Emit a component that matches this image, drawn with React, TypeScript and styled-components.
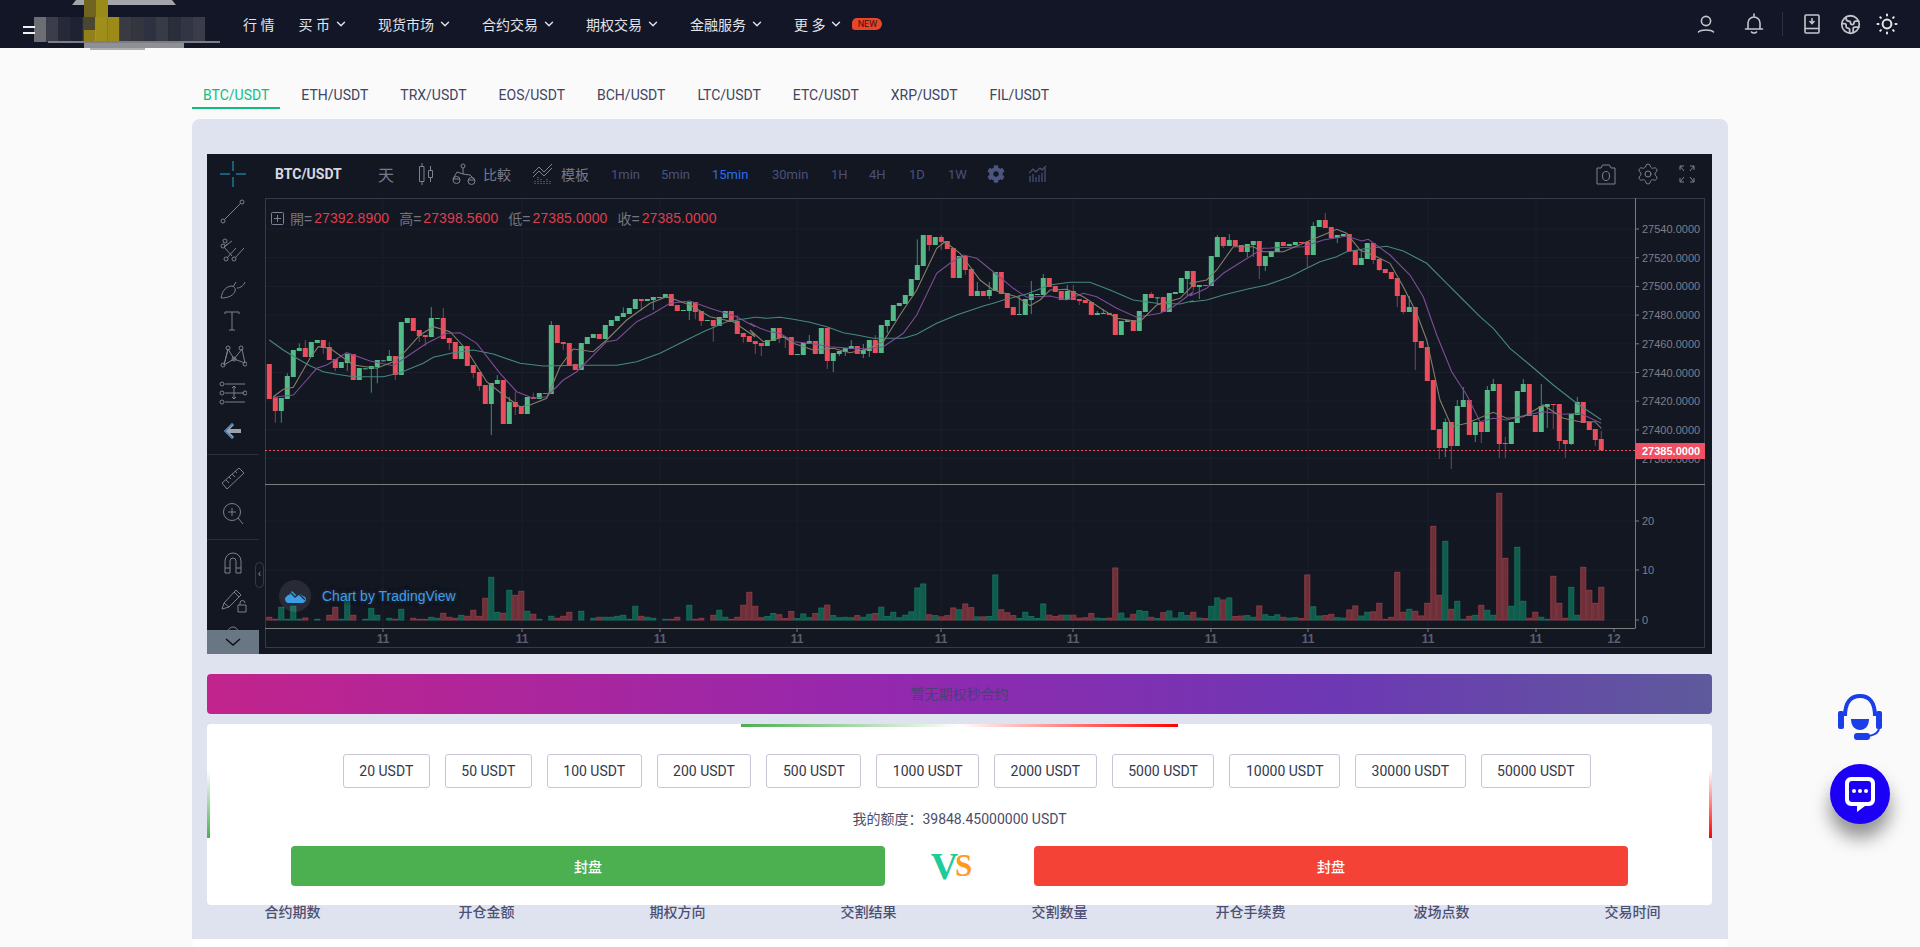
import React from "react";
import styled, { createGlobalStyle } from "styled-components";
import { ChevronDown, Earth, Settings } from "lucide-react";
import { FaCog } from "react-icons/fa";

const CJK = `Roboto, "Noto Sans CJK SC", sans-serif`;

const Global = createGlobalStyle`
  html, body { margin: 0; padding: 0; background: #fafafa; height: 947px; overflow: hidden; }
  body { font-family: ${CJK}; }
  * { box-sizing: border-box; }
`;

/* ---------- chart data, read from the reference (zoomed y, 3x) ---------- */
type Row = [string, number, number, ...number[]];
const rows: Row[] = [
  ["r",492,597],["r",592,633,668],["g",594,633,668],["g",528,597,520],["g",450,531],["g",444,453,430],["r",444,471,420],["g",426,471],["g",420,429],["r",420,444,462],
  ["r",441,480,426],["r",477,504,513],["g",486,504],["g",462,489,513],["r",462,540],["g",504,540],["g",505,508],["g",498,507,578],["g",480,501,550],["g",481,484],
  ["g",468,483,450],["r",468,525,540],["g",366,525],["g",354,369],["r",354,393],["r",390,408,426],["r",405,411,438],["g",354,411,321],["g",354,357],["r",354,417,324],
  ["r",414,429,450],["r",426,477],["g",438,477],["r",438,498],["r",495,519,535],["r",516,558,572],["r",555,612],["g",549,612,705],["g",540,552,525],["r",540,672],
  ["g",606,672,590],["r",606,621,575,645],["r",618,642],["g",591,642],["r",591,597,578],["g",579,597],["r",579,582],["g",375,582,363],["r",375,429],["r",426,432,450],
  ["r",429,495],["r",492,510],["g",429,510],["g",411,432],["g",402,414],["r",402,417],["g",375,417],["g",360,378],["g",348,363],["g",339,351,322],
  ["g",324,342],["g",297,327],["r",297,303,332],["g",297,303],["g",291,300,330],["g",291,294],["g",282,294],["r",282,318],["r",315,333],["g",330,333],
  ["g",306,333,360],["r",306,336,358],["r",333,363,378],["g",360,363],["r",360,378,425],["g",351,378],["g",333,354],["r",333,366],["r",363,402,345],["r",399,411,428],
  ["r",408,426],["r",423,432,462],["r",429,438,468],["g",420,438],["g",384,423],["r",384,414,429],["r",411,414,444],["r",411,465],["g",462,465],["g",429,465],
  ["g",423,432,405],["r",423,462],["g",384,462],["r",384,483,507],["g",459,483,516],["g",453,462,468],["g",444,456,468],["g",438,447,420],["r",438,462],["g",450,462,474,432],
  ["g",420,453,471],["r",420,459,405],["g",375,459],["g",360,378,399],["g",315,363],["g",309,318],["g",285,312],["g",237,288],["g",195,240,118],["g",105,198],
  ["r",105,135,153],["g",111,135],["r",111,126,105,150],["r",123,147],["r",144,234],["g",168,234],["r",168,210,225],["r",207,288],["g",273,288,246],["r",273,288],
  ["g",270,288,246,297],["g",216,273],["r",216,282],["r",279,324],["r",321,345],["g",342,345,285],["g",297,345],["g",282,300,243,342],["g",282,285],["g",234,285,222],
  ["r",234,261],["r",258,276],["r",273,300],["g",273,300,255],["r",273,300,255],["r",297,303,315],["r",300,309],["r",306,345],["g",339,345,333],["g",339,342,327],
  ["r",339,345],["r",342,405],["g",363,405],["g",361,366],["r",360,393],["g",333,393],["g",282,336],["r",282,294,276],["g",292,295,312],["r",291,336],
  ["g",279,336],["g",276,282],["g",234,279],["g",213,237,288],["r",213,261,272],["g",255,261,297],["r",255,258],["g",168,258],["g",111,171,105],["r",111,138,144],
  ["g",120,138,102],["r",120,138],["r",135,156],["g",132,156,171],["g",123,135,171],["r",123,198,237],["g",168,198,213],["g",153,171],["g",126,156],["r",126,138],
  ["g",132,138],["g",126,135],["r",126,129],["r",126,165,201],["g",78,165,66],["g",60,81],["r",60,84,39],["r",81,114],["g",105,114,129],["g",102,108],
  ["r",102,153],["r",150,195],["g",174,195,150],["g",129,177],["r",129,180,192],["r",177,210,213],["r",207,219],["r",216,237],["r",234,288,321],["r",285,336,342],
  ["g",321,336,288],["r",321,426,510],["r",423,444],["r",441,543],["r",540,690],["r",687,744,777],["g",666,744,655,771],["r",666,738,807],["g",618,738,600],["g",600,621,561],
  ["r",600,705],["g",666,705,726],["r",666,696,729],["g",570,696,558],["g",552,573,537],["r",552,732,774],["r",729,732,711,774],["g",666,732],["g",573,669],["g",552,576,537],
  ["r",552,648],["r",645,696],["g",618,696,552],["g",612,621,684],["r",612,615,687],["r",612,723,747],["r",720,732,774],["g",642,732,735],["g",606,645,591],["r",606,669],
  ["r",666,690],["r",687,720,738],["r",717,751,693],
];

const volTop = [412,418,382,418,379,418,414,421,418,421,406,382,418,350,406,421,418,385,406,421,415,418,388,421,415,418,418,412,415,400,412,415,406,409,391,409,355,292,397,400,331,346,334,394,403,418,421,409,415,409,397,421,394,421,415,412,412,412,409,406,418,379,409,412,415,421,418,418,412,421,376,418,415,421,406,391,412,418,412,376,337,379];
const volEnd = [610,658,652,517,637,628,634,648,610,379,586,424,628,604,658,649,646,616,631,646,280,475,619,442,604,655,637,652,658,529,610,655,562,646,502,571,610,562];
const volOver: Record<number, number> = { 121: 45, 141: 52, 173: 45, 108: 32, 109: 36, 158: 22, 159: 20, 160: 22, 165: 14, 116: 16, 129: 16, 114: 12, 180: 10, 181: 14 };

const candles = rows.map((r, i) => {
  const [c, t, b, ...w] = r;
  const body = (b - t) / 3;
  let vol: number;
  if (i < 82) vol = (420 - volTop[i]) / 3;
  else if (i >= 185) vol = (660 - volEnd[i - 185]) / 3;
  else vol = volOver[i] ?? Math.min(18, body * 0.42 + 1);
  return {
    up: c === "g",
    x: 269.3 + 6 * i,
    top: 200 + t / 3,
    bot: 200 + b / 3,
    hi: 200 + Math.min(t, ...w) / 3,
    lo: 200 + Math.max(b, ...w) / 3,
    vol,
  };
});

type Seg = [number, number[]];
const line = (segs: Seg[]) =>
  segs
    .flatMap(([ox, p]) => {
      const out: string[] = [];
      for (let i = 0; i < p.length; i += 2) out.push(`${(ox + p[i] / 3).toFixed(1)},${(200 + p[i + 1] / 3).toFixed(1)}`);
      return out;
    })
    .join(" ");

const teal = line([
  [260, [28,420,70,450,110,475,150,497,190,515,230,523,280,530,330,530,370,530,420,518,490,490,520,472,580,458,640,450,700,462,780,490,850,498,960,496,1070,496,1130,485,1200,460,1260,430,1330,395,1400,365,1485,352]],
  [750, [20,352,50,355,90,352,130,358,180,367,230,380,280,398,320,405,370,415,460,415,500,403,560,370,620,345,700,318,730,310,760,300,830,282,900,255,960,247,1020,247,1080,270,1150,300,1220,310,1290,312,1330,302]],
  [1190, [0,306,50,300,100,285,170,268,230,255,300,230,350,205,390,185,440,170,470,155,520,147,590,139,640,153,710,190,770,250,820,300,870,350,910,385,960,445,1020,495,1090,555,1160,610,1234,659]],
]);
const purple = line([
  [260, [40,592,100,585,140,540,170,505,200,495,260,458,330,483,400,497,440,470,500,430,560,400,600,398,650,430,720,520,770,575,820,595,860,590,910,540,950,515,1040,425,1070,420,1130,365,1180,340,1230,310,1290,303,1350,325,1430,350,1485,380]],
  [750, [0,370,30,385,60,395,90,400,130,425,180,430,240,440,300,445,350,446,400,440,460,400,500,345,560,220,600,190,640,165,680,175,730,215,790,265,830,292,900,288,950,300,1000,280,1040,290,1100,325,1160,352,1230,340,1270,320,1330,275]],
  [1190, [0,288,50,265,100,220,150,188,220,145,340,140,400,120,470,108,515,123,535,118,600,165,660,225,700,290,740,405,785,515,830,585,870,665,910,655,950,660,1010,645,1060,635,1120,643,1170,640,1234,670]],
]);
const tan = line([
  [260, [40,590,70,568,100,562,150,475,175,440,210,445,280,495,350,505,400,485,430,460,480,405,520,380,570,395,620,450,680,545,730,585,780,620,810,615,860,595,900,500,940,447,1000,455,1040,420,1100,360,1170,310,1220,290,1290,315,1350,350,1420,365,1485,410]],
  [750, [0,390,40,425,70,420,100,410,130,430,190,450,250,445,300,458,350,448,400,425,450,345,500,270,560,145,585,125,630,160,690,240,730,270,800,290,840,317,870,300,900,270,950,268,1000,290,1060,330,1100,355,1170,365,1220,315,1290,295,1330,255]],
  [1190, [0,250,50,240,80,210,130,140,190,140,220,155,280,155,340,130,400,105,440,88,470,100,510,150,560,170,600,190,640,260,680,340,710,420,750,600,785,680,830,670,910,637,950,655,1000,650,1060,615,1120,655,1170,665,1215,665,1234,685]],
]);

const priceLabels = [27540,27520,27500,27480,27460,27440,27420,27400,27380];
const priceY = (v: number) => 229 + ((27540 - v) / 20) * 28.7;
const timeTicks = [383,522,660,797,941,1073,1211,1308,1428,1536];

/* ---------- page ---------- */
const Page = styled.div`
  width: 1920px;
  height: 947px;
  overflow: hidden;
  position: relative;
`;
const Header = styled.header`
  height: 48px;
  background: #121626;
  display: flex;
  align-items: center;
  padding-right: 22px;
  color: #e2e4ea;
  font-size: 14px;
`;
const Brand = styled.div`
  width: 243px;
  height: 48px;
  position: relative;
  flex: none;
`;
const LogoMosaic = styled.svg`
  position: absolute;
  left: 0;
  top: 0;
`;
const Nav = styled.nav`
  display: flex;
  align-items: center;
  height: 48px;
`;
const NavItem = styled.div<{ $gap?: number }>`
  display: flex;
  align-items: center;
  gap: 4px;
  margin-right: ${(p) => p.$gap ?? 30}px;
  white-space: pre;
`;
const NewBadge = styled.span`
  width: 30px;
  height: 12px;
  border-radius: 5px 6px 6px 3px;
  background: #e8452a;
  color: #3a1410;
  font-size: 9px;
  line-height: 12px;
  text-align: center;
  margin-left: 5px;
`;
const HeaderRight = styled.div`
  margin-left: auto;
  display: flex;
  align-items: center;
  color: #c4c6cc;
`;
const HeadIcon = styled.div<{ $ml?: number }>`
  width: 22px;
  height: 22px;
  margin-left: ${(p) => p.$ml ?? 0}px;
  display: flex;
  align-items: center;
  justify-content: center;
`;
const HeadDivider = styled.div`
  width: 1px;
  height: 24px;
  background: #2c3040;
  margin-left: 17px;
`;

const Main = styled.main`
  width: 1536px;
  margin: 34px auto 0;
`;
const Tabs = styled.div`
  display: flex;
  gap: 10px;
  margin-bottom: 10px;
`;
const Tab = styled.div<{ $active?: boolean }>`
  height: 27px;
  padding: 0 11px;
  line-height: 26px;
  font-size: 14px;
  color: ${(p) => (p.$active ? "#0fbe7f" : "#3f4463")};
  border-bottom: 2px solid ${(p) => (p.$active ? "#0fbe7f" : "transparent")};
`;
const Panel = styled.section`
  background: #dfe3ef;
  border-radius: 8px 8px 0 0;
  padding: 35px 16px 0 15px;
`;
const Chart = styled.div`
  height: 500px;
  background: #131722;
  position: relative;
  overflow: hidden;
`;
const TopBar = styled.div`
  height: 44px;
  display: flex;
  align-items: center;
  padding: 0 17px 4px 0;
`;
const CrossSlot = styled.div`
  width: 52px;
  height: 48px;
  flex: none;
  display: flex;
  align-items: center;
  justify-content: center;
`;
const TopText = styled.span<{ $ml: number; $w?: number; $tone?: "sym" | "on" | "cn" | "dim" | "big" }>`
  margin-left: ${(p) => p.$ml}px;
  width: ${(p) => (p.$w ? `${p.$w}px` : "auto")};
  font-size: ${(p) => (p.$tone === "big" ? 16 : p.$tone === "sym" || p.$tone === "cn" ? 14 : 13)}px;
  font-weight: ${(p) => (p.$tone === "sym" ? 700 : 400)};
  white-space: nowrap;
  color: ${(p) =>
    p.$tone === "sym"
      ? "#d6d9e0"
      : p.$tone === "on"
        ? "#2a6cf0"
        : p.$tone === "cn" || p.$tone === "big"
          ? "#757a8e"
          : "#49527a"};
`;
const TopIcon = styled.div<{ $ml: number; $auto?: boolean }>`
  margin-left: ${(p) => (p.$auto ? "auto" : `${p.$ml}px`)};
  display: flex;
  align-items: center;
  justify-content: center;
`;
const ChartBody = styled.div`
  display: flex;
  height: 456px;
`;
const LeftTools = styled.div`
  width: 52px;
  height: 456px;
  flex: none;
  overflow: hidden;
  display: flex;
  flex-direction: column;
`;
const ToolSlot = styled.div<{ $h: number }>`
  height: ${(p) => p.$h}px;
  flex: none;
  display: flex;
  align-items: center;
  justify-content: center;
`;
const ToolSep = styled.div`
  height: 1px;
  flex: none;
  background: #2a2e39;
`;
const Plot = styled.svg`
  display: block;
  flex: none;
`;
const AxisText = styled.text`
  font-family: "Liberation Sans", Arial, sans-serif;
  font-size: 11px;
  fill: #7d7f8a;
`;
const TimeText = styled.text`
  font-family: "Liberation Sans", Arial, sans-serif;
  font-size: 12px;
  font-weight: 700;
  fill: #5c5f6b;
  text-anchor: middle;
`;
const TagText = styled.text`
  font-family: "Liberation Sans", Arial, sans-serif;
  font-size: 11px;
  font-weight: 700;
  fill: #ffffff;
`;
const Legend = styled.div`
  position: absolute;
  left: 64px;
  top: 56px;
  height: 16px;
  display: flex;
  align-items: center;
  font-family: "Liberation Sans", "Noto Sans CJK TC", sans-serif;
  font-size: 14px;
  color: #74767f;
`;
const LegendValue = styled.span`
  color: #dc3f50;
  margin: 0 10px 0 2px;
  letter-spacing: 0.1px;
`;
const LegendBox = styled.svg`
  margin-right: 6px;
`;
const Handle = styled.div`
  position: absolute;
  left: 48px;
  top: 408px;
  width: 9px;
  height: 26px;
  border: 1px solid #343848;
  border-radius: 5px;
  color: #8a8d98;
  font-size: 11px;
  line-height: 22px;
  text-align: center;
`;
const ScrollDown = styled.div`
  position: absolute;
  left: 0;
  bottom: 0;
  width: 52px;
  height: 24px;
  background: #697684;
  display: flex;
  align-items: center;
  justify-content: center;
  color: #111;
`;
const Watermark = styled.div`
  position: absolute;
  left: 72px;
  top: 426px;
  display: flex;
  align-items: center;
  gap: 11px;
  color: #3b9fe8;
  font-size: 14px;
  font-family: "Liberation Sans", sans-serif;
  text-shadow: 0 0 4px #2a3040, 0 0 4px #2a3040, 0 0 3px #131722;
`;
const WatermarkDisc = styled.div`
  width: 32px;
  height: 32px;
  border-radius: 50%;
  background: rgba(255, 255, 255, 0.09);
  display: flex;
  align-items: center;
  justify-content: center;
`;
const Banner = styled.div`
  margin-top: 20px;
  height: 40px;
  border-radius: 4px;
  background: linear-gradient(90deg, #c2248c 0%, #9428ae 45%, #6d38b4 75%, #5e5a9c 100%);
  color: #4a3f78;
  font-size: 14px;
  line-height: 40px;
  text-align: center;
`;
const Card = styled.div`
  margin-top: 10px;
  height: 181px;
  background: #fff;
  border-radius: 4px;
  padding-top: 30px;
  position: relative;
`;
const TopGlow = styled.div`
  position: absolute;
  left: 534px;
  top: 0;
  width: 437px;
  height: 3px;
  background: linear-gradient(90deg, #4caf50 0%, #fff 50%, #ff0000 100%);
`;
const SideGlow = styled.div<{ $side: "left" | "right"; $color: string }>`
  position: absolute;
  ${(p) => p.$side}: 0;
  top: 46px;
  width: 3px;
  height: 68px;
  background: linear-gradient(180deg, #fff 0%, ${(p) => p.$color} 100%);
`;
const Amounts = styled.div`
  display: flex;
  justify-content: center;
  gap: 15px;
  padding-left: 15px;
`;
const Amount = styled.button`
  height: 34px;
  padding: 0 15.5px;
  border: 1px solid #c8c6d6;
  border-radius: 3px;
  background: #fff;
  color: #33384a;
  font-family: ${CJK};
  font-size: 14px;
`;
const Balance = styled.div`
  margin-top: 22px;
  height: 18px;
  line-height: 18px;
  font-size: 14px;
  text-align: center;
  color: #4a4e6b;
`;
const Actions = styled.div`
  margin-top: 18px;
  display: grid;
  grid-template-columns: 594px 149px 594px;
  justify-content: center;
`;
const Action = styled.button<{ $bg: string }>`
  height: 40px;
  border: 0;
  border-radius: 4px;
  background: ${(p) => p.$bg};
  color: #fff;
  font-family: ${CJK};
  font-size: 14px;
  font-weight: 500;
`;
const Vs = styled.div`
  padding-right: 16px;
  display: flex;
  justify-content: center;
  align-items: center;
  font-family: "Liberation Serif", serif;
  font-weight: 700;
`;
const VsV = styled.span`
  font-size: 38px;
  color: #1ecb9a;
  line-height: 40px;
`;
const VsS = styled.span`
  font-size: 31px;
  color: #ff9a1f;
  line-height: 40px;
  margin-left: -3px;
`;
const TableHead = styled.div`
  display: grid;
  grid-template-columns: 197px repeat(7, 191px);
  margin-left: -13px;
  padding-bottom: 20px;
`;
const HeadCell = styled.div`
  text-align: center;
  line-height: 14px;
  font-size: 14px;
  font-weight: 500;
  color: #4d5073;
`;
const TableBody = styled.div`
  height: 8px;
  margin: 0 1px;
  background: #fff;
`;
const Float = styled.div`
  position: fixed;
  left: 1830px;
  top: 694px;
  width: 60px;
  display: flex;
  flex-direction: column;
  align-items: center;
  gap: 24px;
`;
const ChatButton = styled.div`
  width: 60px;
  height: 60px;
  border-radius: 50%;
  background: #1c00f5;
  box-shadow: 0 14px 18px rgba(0, 0, 0, 0.42);
  display: flex;
  align-items: center;
  justify-content: center;
`;

/* ---------- drawn icons ---------- */
const TOOL = { fill: "none", stroke: "#7c808c", strokeWidth: 1 } as const;
const Dot = ({ x, y }: { x: number; y: number }) => <circle cx={x} cy={y} r="2" />;

const icons: Record<string, React.ReactNode> = {
  line: (<g><path d="M5.5 20.5 21.5 4.5" /><Dot x={4} y={22} /><Dot x={23} y={3} /></g>),
  fork: (<g><path d="M5 9 13 18M6 8l7-5M8 20 17 10M16 20l9-10M5 9 9 6" /><Dot x={4} y={8} /><Dot x={7} y={21} /><Dot x={15} y={21} /><Dot x={6} y={3} /></g>),
  brush: (<g><path d="M2 24c1-6 4-11 10-12 3 0 5 2 4 5-1 4-6 7-14 7Zm12-11 3-5M18 14c4 0 7-3 8-6" /></g>),
  text: (<g><path d="M6 4h14M6 4v2M20 4v2M13 4v18M10 22h6" /></g>),
  pattern: (<g><path d="M5 23 9 7l6 10 8-10 3 14M9 7l-4 16M5 23l10-6 11 4" /><Dot x={4} y={23} /><Dot x={9} y={6} /><Dot x={15} y={17} /><Dot x={22} y={6} /><Dot x={26} y={22} /></g>),
  fib: (<g><path d="M6 4h20M6 13h19M6 22h20M15 6v13M13 8l2-2 2 2M13 17l2 2 2-2" /><Dot x={3} y={4} /><Dot x={3} y={13} /><Dot x={3} y={22} /><Dot x={26} y={13} /></g>),
  ruler: (<g><path d="M3 19 20 4l5 5L8 25Zm4-3 3 3m0-6 2 2m1-5 3 3m0-6 2 2" /></g>),
  zoom: (<g><circle cx="13" cy="12" r="8.5" /><path d="M13 8v8M9 12h8M19 18l5 6" /></g>),
  magnet: (<g><path d="M6 24V12a8 8 0 0 1 16 0v12h-5V12a3 3 0 0 0-6 0v12ZM6 19h5M17 19h5" /></g>),
  pencil: (<g><path d="M3 24l2-6L17 5l5 5-12 12Zm2-6 5 4M15 7l5 5" /><path d="M19 20h8v7h-8ZM21 20v-2a2.5 2.5 0 0 1 5 0" /></g>),
  lock: (<g><path d="M5 14h18v10H5ZM9 14V9a5 5 0 0 1 10 0" /></g>),
};
const ToolIcon = ({ name }: { name: string }) => (
  <svg width="28" height="28" viewBox="0 0 28 28" {...TOOL} style={{ flex: "none" }}>{icons[name]}</svg>
);
const BackArrow = () => (
  <svg width="20" height="18" viewBox="0 0 20 18">
    <path d="M9 1 1 9l8 8 2-2-4-4h11V7H7l4-4Z" fill="#9aa3ad" />
    <path d="M9 1 1 9l8 8 1-1-7-7 7-7Z" fill="#3f79b8" />
  </svg>
);

const Logo = () => {
  const cells = ["#6c6d75","#3b3e4a","#262a38","#1e2232","#4a4632","#a08e1a","#9c8b18","#3a3a42","#34363f","#2e3140","#383a46","#2a2d3a","#323543","#3a3c49"];
  return (
    <LogoMosaic width="224" height="52" viewBox="0 0 224 52">
      <path d="M72 5h104l-4-5H76Z" fill="#a4a5ab" />
      <rect x="84" y="0" width="24" height="17" fill="#6f6420" />
      <rect x="96" y="0" width="12" height="17" fill="#9a8a1a" />
      {cells.map((c, i) => (
        <rect key={i} x={34 + i * 12.2} y="17" width="12.4" height="25" fill={c} />
      ))}
      <rect x="84" y="30" width="12" height="12" fill="#b09a10" opacity="0.7" />
      <rect x="48" y="41" width="172" height="2" fill="#7d7e84" />
      <rect x="84" y="43" width="100" height="5" fill="#8f9096" />
      <rect x="90" y="48" width="55" height="2" fill="#9a9ba0" opacity="0.8" />
      <rect x="23" y="26" width="12" height="2" fill="#f0f0f0" />
      <rect x="23" y="32" width="12" height="2" fill="#f0f0f0" />
    </LogoMosaic>
  );
};

const UserIcon = () => (
  <svg width="20" height="20" viewBox="0 0 20 20" fill="none" stroke="currentColor" strokeWidth="1.6">
    <circle cx="10" cy="7" r="4.6" /><path d="M2.5 18c2.5-2.6 12.5-2.6 15 0" strokeLinecap="round" />
  </svg>
);
const BellIcon = () => (
  <svg width="20" height="22" viewBox="0 0 20 22" fill="none" stroke="currentColor" strokeWidth="1.6">
    <path d="M10 1v2M4 16V10a6 6 0 0 1 12 0v6M1.5 16h17M7.5 19c1 1.4 4 1.4 5 0" strokeLinecap="round" />
  </svg>
);
const BookIcon = () => (
  <svg width="18" height="20" viewBox="0 0 18 20" fill="none" stroke="currentColor" strokeWidth="1.6">
    <rect x="2" y="1" width="14" height="18" rx="1" /><path d="M2 14.5h14" />
    <path d="M9 4v5M6.5 7 9 9.6 11.5 7" strokeWidth="1.5" />
  </svg>
);
const SunIcon = () => (
  <svg width="22" height="22" viewBox="0 0 22 22" fill="none" stroke="#e8e8ec">
    <circle cx="11" cy="11" r="4.4" strokeWidth="2" />
    <path d="M11 1.5v1M11 19.5v1M1.5 11h1M19.5 11h1M4.3 4.3l.6.6M17.1 17.1l.6.6M4.3 17.7l.6-.6M17.1 4.9l.6-.6" strokeWidth="2" strokeLinecap="round" />
  </svg>
);
const Crosshair = () => (
  <svg width="26" height="26" viewBox="0 0 26 26" stroke="#1aa9d8" strokeWidth="1">
    <path d="M13 0v10M13 16v10M0 13h10M16 13h10" />
  </svg>
);
const CandleIcon = () => (
  <svg width="16" height="24" viewBox="0 0 16 24" fill="none" stroke="#7c8194">
    <path d="M1.5 4.5h4.5v15H1.5ZM4 1v3.5M4 19.5V23M10.5 8.5h4v7h-4ZM12.5 4v4.5M12.5 15.5V20" />
  </svg>
);
const ScalesIcon = () => (
  <svg width="24" height="22" viewBox="0 0 24 22" fill="none" stroke="#7c8194">
    <circle cx="11" cy="3" r="2" /><circle cx="4.5" cy="17" r="3.5" /><circle cx="19.5" cy="18" r="3.5" />
    <path d="M11 5v6M1 16 5 9l6 2 7 1 5 5M1 16h7M16 17h7" />
  </svg>
);
const TemplateIcon = () => (
  <svg width="20" height="20" viewBox="0 0 20 20" fill="none" stroke="#7c8194">
    <path d="M0 9 6 3l5 5 8-8M0 13l6-6 5 5 8-8" />
    <path d="M2 20v-4M5 20v-7M8 20v-5M11 20v-3M14 20v-6M17 20v-4" strokeDasharray="1 1" />
  </svg>
);
const BarsIcon = () => (
  <svg width="18" height="18" viewBox="0 0 18 18" fill="none" stroke="#49527a" strokeWidth="1.2">
    <path d="M1 17v-6M4 17v-8M7 17v-5M10 17v-7M13 17v-9M16 17V3" />
    <path d="M0 8 4 4l3 3 4-4 2 2 4-4" />
  </svg>
);
const CameraIcon = () => (
  <svg width="20" height="22" viewBox="0 0 20 22" fill="none" stroke="#7c8194">
    <path d="M1 5h4l1.5-3h7L15 5h4v16H1Z" strokeLinejoin="round" /><ellipse cx="10" cy="13" rx="3.5" ry="4.5" />
  </svg>
);
const ExpandIcon = () => (
  <svg width="16" height="18" viewBox="0 0 16 18" fill="none" stroke="#7c8194">
    <path d="M1 1h4M1 1v4M1 1l4 5M15 1h-4M15 1v4M15 1l-4 5M1 17h4M1 17v-4M1 17l4-5M15 17h-4M15 17v-4M15 17l-4-5" />
  </svg>
);
const Cloud = () => (
  <svg width="22" height="14" viewBox="0 0 22 14" fill="#3b9fe8">
    <path d="M1 9.5C1 7.5 2.8 6 5 6l3-4 5 5 3-2 3 2c2 .5 3 1.6 3 3.3 0 2-1.6 3.7-4 3.7H4.5C2.4 14 1 12 1 9.5Z" />
    <path d="M0 9 6 3l5 5 4-3 6 6" stroke="#28303c" strokeWidth="1.4" fill="none" />
  </svg>
);
const Headset = () => (
  <svg width="44" height="46" viewBox="0 0 44 46" fill="none">
    <path d="M7 22C7 8 13 2 22 2s15 6 15 20" stroke="#1a3fe8" strokeWidth="4" />
    <rect x="0" y="17" width="6" height="18" rx="2" fill="#1a3fe8" />
    <rect x="38" y="17" width="6" height="18" rx="2" fill="#1a3fe8" />
    <path d="M13 25h18c0 7-4 11-9 11s-9-4-9-11Z" fill="#1a3fe8" />
    <path d="M41 34c0 5-5 7-10 8" stroke="#1a3fe8" strokeWidth="2" />
    <rect x="16" y="39" width="16" height="7" rx="3" fill="#1a3fe8" />
  </svg>
);
const Bubble = () => (
  <svg width="32" height="36" viewBox="0 0 32 36">
    <path d="M7 1h18a6 6 0 0 1 6 6v17a6 6 0 0 1-6 6h-4l-8 6v-6H7a6 6 0 0 1-6-6V7a6 6 0 0 1 6-6Z" fill="#fff" />
    <rect x="5" y="5" width="22" height="21" rx="3" fill="#1c00f5" />
    <circle cx="10" cy="15" r="2" fill="#fff" /><circle cx="16" cy="15" r="2" fill="#fff" /><circle cx="22" cy="15" r="2" fill="#fff" />
  </svg>
);

const ChartPlot = () => (
  <Plot width="1453" height="456" viewBox="259 198 1453 456">
    {priceLabels.map((v) => (<path key={v} d={`M265 ${priceY(v)}H1635`} stroke="#1b1f2d" />))}
    {[521, 570, 620].map((y) => (<path key={y} d={`M265 ${y}H1635`} stroke="#1b1f2d" />))}
    {timeTicks.map((x) => (<path key={x} d={`M${x} 198V628`} stroke="#1b1f2d" />))}
    <rect x="265.5" y="198.5" width="1439" height="449" fill="none" stroke="#363a4c" />
    <path d="M1635.5 198V628M265 484.5H1705M265 628.5H1635.5" stroke="#7c7c7c" />

    {candles.map((c, i) => (
      <rect key={i} x={c.x - 2.5} y={620 - c.vol} width="5" height={c.vol} fill={c.up ? "#0f5c4c" : "#6f2f38"} stroke={c.up ? "#14705a" : "#8c3a44"} strokeWidth="1" />
    ))}
    {candles.map((c, i) => (
      <path key={i} d={`M${c.x} ${c.hi}V${c.lo}`} stroke={c.up ? "#3a8f72" : "#8f3d4c"} />
    ))}
    {candles.map((c, i) => (
      <rect key={i} x={c.x - 2.5} y={c.top} width="5" height={Math.max(1, c.bot - c.top)} fill={c.up ? "#53b987" : "#eb4d5c"} />
    ))}
    <polyline points={teal} fill="none" stroke="#478880" strokeWidth="1.1" />
    <polyline points={purple} fill="none" stroke="#7e4d95" strokeWidth="1.1" />
    <polyline points={tan} fill="none" stroke="#857f68" strokeWidth="1.1" />
    <path d="M265 450.5H1635" stroke="#ef5350" strokeDasharray="2 2" />

    {priceLabels.map((v) => (
      <g key={v}>
        <path d={`M1635 ${priceY(v)}h4`} stroke="#7c7c7c" />
        <AxisText x="1642" y={priceY(v) + 4}>{v}.0000</AxisText>
      </g>
    ))}
    <rect x="1635" y="443" width="70" height="16" fill="#ef5062" />
    <TagText x="1642" y="455">27385.0000</TagText>
    {[[20, 521], [10, 570], [0, 620]].map(([t, y]) => (
      <g key={t}>
        <path d={`M1635 ${y}h4`} stroke="#7c7c7c" />
        <AxisText x="1642" y={y + 4}>{t}</AxisText>
      </g>
    ))}
    {timeTicks.map((x) => (
      <g key={x}>
        <path d={`M${x} 628v4`} stroke="#7c7c7c" />
        <TimeText x={x} y="643">11</TimeText>
      </g>
    ))}
    <path d="M1614 628v4" stroke="#7c7c7c" />
    <TimeText x="1614" y="643">12</TimeText>
  </Plot>
);

const navItems = ["现货市场", "合约交易", "期权交易", "金融服务"];
const tabs = ["BTC/USDT","ETH/USDT","TRX/USDT","EOS/USDT","BCH/USDT","LTC/USDT","ETC/USDT","XRP/USDT","FIL/USDT"];
const amounts = [20,50,100,200,500,1000,2000,5000,10000,30000,50000];
const heads = ["合约期数","开仓金额","期权方向","交割结果","交割数量","开仓手续费","波场点数","交易时间"];

export default function App() {
  return (
    <Page>
      <Global />
      <Header>
        <Brand><Logo /></Brand>
        <Nav>
          <NavItem $gap={24}>行 情</NavItem>
          <NavItem>买 币<ChevronDown size={14} strokeWidth={2.4} /></NavItem>
          {navItems.map((n) => (
            <NavItem key={n}>{n}<ChevronDown size={14} strokeWidth={2.4} /></NavItem>
          ))}
          <NavItem $gap={0}>更 多<ChevronDown size={14} strokeWidth={2.4} /><NewBadge>NEW</NewBadge></NavItem>
        </Nav>
        <HeaderRight>
          <HeadIcon><UserIcon /></HeadIcon>
          <HeadIcon $ml={26}><BellIcon /></HeadIcon>
          <HeadDivider />
          <HeadIcon $ml={18}><BookIcon /></HeadIcon>
          <HeadIcon $ml={16}><Earth size={21} strokeWidth={2} /></HeadIcon>
          <HeadIcon $ml={15}><SunIcon /></HeadIcon>
        </HeaderRight>
      </Header>
      <Main>
        <Tabs>
          {tabs.map((t, i) => (<Tab key={t} $active={i === 0}>{t}</Tab>))}
        </Tabs>
        <Panel>
          <Chart>
            <TopBar>
              <CrossSlot><Crosshair /></CrossSlot>
              <TopText $ml={16} $tone="sym" $w={70}>BTC/USDT</TopText>
              <TopText $ml={33} $tone="big" $w={17}>天</TopText>
              <TopIcon $ml={23}><CandleIcon /></TopIcon>
              <TopIcon $ml={18}><ScalesIcon /></TopIcon>
              <TopText $ml={7} $tone="cn" $w={28}>比較</TopText>
              <TopIcon $ml={22}><TemplateIcon /></TopIcon>
              <TopText $ml={8} $tone="cn" $w={28}>模板</TopText>
              <TopText $ml={22} $w={29}>1min</TopText>
              <TopText $ml={21} $w={29}>5min</TopText>
              <TopText $ml={22} $w={37} $tone="on">15min</TopText>
              <TopText $ml={23} $w={36}>30min</TopText>
              <TopText $ml={23} $w={15}>1H</TopText>
              <TopText $ml={23} $w={17}>4H</TopText>
              <TopText $ml={23} $w={15}>1D</TopText>
              <TopText $ml={24} $w={18}>1W</TopText>
              <TopIcon $ml={21}><FaCog size={18} color="#4a5580" /></TopIcon>
              <TopIcon $ml={24}><BarsIcon /></TopIcon>
              <TopIcon $ml={0} $auto><CameraIcon /></TopIcon>
              <TopIcon $ml={20}><Settings size={24} strokeWidth={1} color="#7c8194" /></TopIcon>
              <TopIcon $ml={19}><ExpandIcon /></TopIcon>
            </TopBar>
            <ChartBody>
              <LeftTools>
                <ToolSlot $h={30}><ToolIcon name="line" /></ToolSlot>
                <ToolSlot $h={48}><ToolIcon name="fork" /></ToolSlot>
                <ToolSlot $h={24}><ToolIcon name="brush" /></ToolSlot>
                <ToolSlot $h={44}><ToolIcon name="text" /></ToolSlot>
                <ToolSlot $h={24}><ToolIcon name="pattern" /></ToolSlot>
                <ToolSlot $h={52}><ToolIcon name="fib" /></ToolSlot>
                <ToolSlot $h={22}><BackArrow /></ToolSlot>
                <ToolSlot $h={12} />
                <ToolSep />
                <ToolSlot $h={46}><ToolIcon name="ruler" /></ToolSlot>
                <ToolSlot $h={26}><ToolIcon name="zoom" /></ToolSlot>
                <ToolSlot $h={12} />
                <ToolSep />
                <ToolSlot $h={46}><ToolIcon name="magnet" /></ToolSlot>
                <ToolSlot $h={26}><ToolIcon name="pencil" /></ToolSlot>
                <ToolSlot $h={50}><ToolIcon name="lock" /></ToolSlot>
              </LeftTools>
              <ChartPlot />
            </ChartBody>
            <Legend>
              <LegendBox width="13" height="13" viewBox="0 0 13 13" fill="none" stroke="#7c8194">
                <rect x="0.5" y="0.5" width="12" height="12" rx="1" /><path d="M6.5 3v7M3 6.5h7" />
              </LegendBox>
              開=<LegendValue>27392.8900</LegendValue>
              高=<LegendValue>27398.5600</LegendValue>
              低=<LegendValue>27385.0000</LegendValue>
              收=<LegendValue>27385.0000</LegendValue>
            </Legend>
            <Handle>‹</Handle>
            <ScrollDown>
              <svg width="16" height="8" viewBox="0 0 16 8" fill="none" stroke="#0c0f18" strokeWidth="1.5"><path d="M1 1l7 6 7-6" /></svg>
            </ScrollDown>
            <Watermark>
              <WatermarkDisc><Cloud /></WatermarkDisc>
              Chart by TradingView
            </Watermark>
          </Chart>
          <Banner>暂无期权秒合约</Banner>
          <Card>
            <TopGlow />
            <SideGlow $side="left" $color="#4caf50" />
            <SideGlow $side="right" $color="#ff0000" />
            <Amounts>
              {amounts.map((a) => (<Amount key={a}>{a} USDT</Amount>))}
            </Amounts>
            <Balance>我的额度：39848.45000000 USDT</Balance>
            <Actions>
              <Action $bg="#4caf50">封盘</Action>
              <Vs><VsV>V</VsV><VsS>S</VsS></Vs>
              <Action $bg="#f44336">封盘</Action>
            </Actions>
          </Card>
          <TableHead>
            {heads.map((h) => (<HeadCell key={h}>{h}</HeadCell>))}
          </TableHead>
        </Panel>
        <TableBody />
      </Main>
      <Float>
        <Headset />
        <ChatButton><Bubble /></ChatButton>
      </Float>
    </Page>
  );
}
